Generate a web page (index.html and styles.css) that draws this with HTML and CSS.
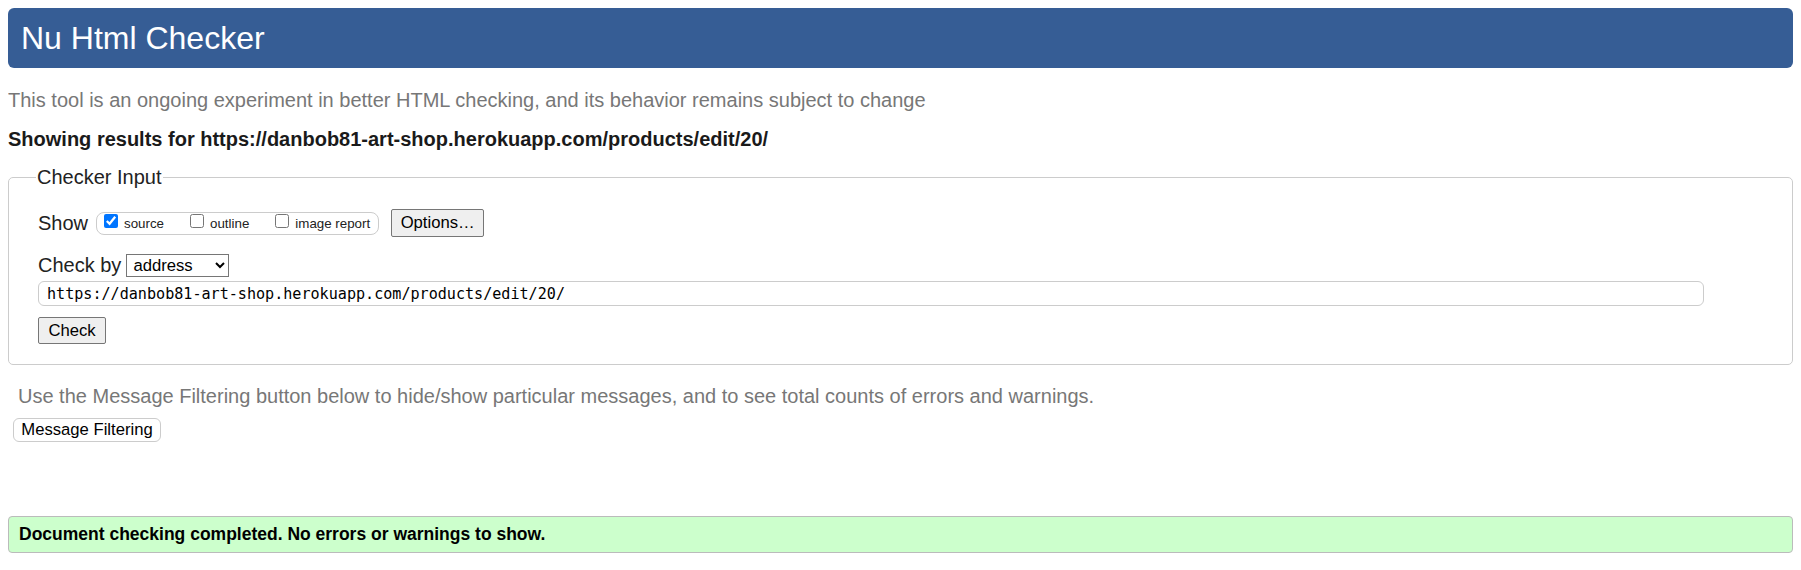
FILE: index.html
```html
<!DOCTYPE html>
<html lang="en">
<head>
<meta charset="utf-8">
<title>Nu Html Checker</title>
<link rel="stylesheet" href="styles.css">
</head>
<body>
<h1 class="title">Nu Html Checker</h1>
<p class="intro">This tool is an ongoing experiment in better HTML checking, and its behavior remains subject to change</p>
<p class="results">Showing results for https://danbob81-art-shop.herokuapp.com/products/edit/20/</p>
<form class="form">
  <fieldset class="input-box">
    <legend class="legend">Checker Input</legend>
    <div class="row row-show">
      <span class="label">Show</span>
      <div class="show-group">
        <label class="opt"><input type="checkbox" checked><span class="opt-text">source</span></label>
        <label class="opt"><input type="checkbox"><span class="opt-text">outline</span></label>
        <label class="opt"><input type="checkbox"><span class="opt-text">image report</span></label>
      </div>
      <button type="button" class="btn btn-options">Options…</button>
    </div>
    <div class="row row-by">
      <span class="label">Check by</span>
      <select class="select"><option>address</option></select>
    </div>
    <div class="row row-url">
      <input class="url" type="text" value="https://danbob81-art-shop.herokuapp.com/products/edit/20/">
    </div>
    <div class="row row-check">
      <button type="button" class="btn btn-check">Check</button>
    </div>
  </fieldset>
</form>
<p class="filter-note">Use the Message Filtering button below to hide/show particular messages, and to see total counts of errors and warnings.</p>
<button type="button" class="btn-filter">Message Filtering</button>
<p class="success">Document checking completed. No errors or warnings to show.</p>
</body>
</html>
```
FILE: styles.css
```css
html, body {
  background: #ffffff;
}
body {
  margin: 8px;
  font-family: "Liberation Sans", Arial, sans-serif;
  font-size: 20px;
  color: #222222;
}
.title {
  margin: 0;
  padding: 12px 13px;
  font-size: 32px;
  line-height: 36px;
  font-weight: normal;
  color: #ffffff;
  background: #365d95;
  border-radius: 6px;
}
.intro {
  margin: 21px 0 0;
  font-size: 20px;
  line-height: 23px;
  color: #777777;
}
.results {
  margin: 16px 0 0;
  font-size: 20px;
  line-height: 23px;
  font-weight: bold;
  color: #1a1a1a;
}
.form {
  margin: 15px 0 0;
}
.input-box {
  margin: 0;
  padding: 20px 29px 20px 29px;
  border: 1px solid #cccccc;
  border-radius: 5px;
}
.legend {
  padding: 0 1px;
  margin-left: -2px;
  font-size: 20px;
  line-height: 23px;
  color: #222222;
}
.row {
  display: flex;
  align-items: center;
}
.row-show {
  height: 28px;
}
.row-by {
  margin-top: 17px;
  height: 23px;
}
.row-url {
  margin-top: 4px;
}
.row-check {
  margin-top: 11px;
}
.label {
  font-size: 20px;
  line-height: 23px;
}
.show-group {
  display: flex;
  align-items: flex-start;
  gap: 22px;
  margin-left: 8px;
  height: 23px;
  box-sizing: border-box;
  padding: 0 8px 0 3px;
  border: 1px solid #cccccc;
  border-radius: 8px;
  font-size: 13.33px;
}
.opt {
  display: flex;
  align-items: flex-start;
  white-space: nowrap;
}
.opt input {
  margin: 1px 6px 0 4px;
  width: 14px;
  height: 14px;
}
.opt-text {
  display: block;
  margin-top: 3px;
  line-height: 15px;
}
.btn {
  appearance: none;
  font-family: "Liberation Sans", Arial, sans-serif;
  font-size: 16.67px;
  color: #000000;
  background: #efefef;
  border: 1px solid #767676;
  border-radius: 2px;
  box-sizing: border-box;
  padding: 0;
  white-space: nowrap;
}
.btn-options {
  margin-left: 12px;
  height: 28px;
  width: 93px;
}
.select {
  margin-left: 5px;
  width: 103px;
  height: 23px;
  font-family: "Liberation Sans", Arial, sans-serif;
  font-size: 16.67px;
  color: #000000;
  border: 1px solid #767676;
  border-radius: 0;
  background: #ffffff;
  padding: 0 2px;
}
.url {
  width: calc(100% - 59px);
  height: 25px;
  box-sizing: border-box;
  padding: 0 8px;
  border: 1px solid #cccccc;
  border-radius: 6px;
  font-family: "DejaVu Sans Mono", "Liberation Mono", monospace;
  font-size: 15.1px;
  color: #000000;
  outline: none;
}
.btn-check {
  height: 27px;
  width: 68px;
}
.filter-note {
  margin: 20px 0 0;
  padding-left: 10px;
  font-size: 20px;
  line-height: 23px;
  color: #777777;
}
.btn-filter {
  display: block;
  margin: 10px 0 0 5px;
  height: 24px;
  width: 148px;
  box-sizing: border-box;
  padding: 0;
  white-space: nowrap;
  font-family: "Liberation Sans", Arial, sans-serif;
  font-size: 16.67px;
  color: #000000;
  background: #ffffff;
  border: 1px solid #cccccc;
  border-radius: 6px;
}
.success {
  margin: 74px 0 0;
  padding: 0 10px;
  height: 37px;
  box-sizing: border-box;
  line-height: 35px;
  font-size: 17.5px;
  font-weight: bold;
  color: #000000;
  background: #ccffcc;
  border: 1px solid #bbbbbb;
  border-radius: 4px;
}
```
